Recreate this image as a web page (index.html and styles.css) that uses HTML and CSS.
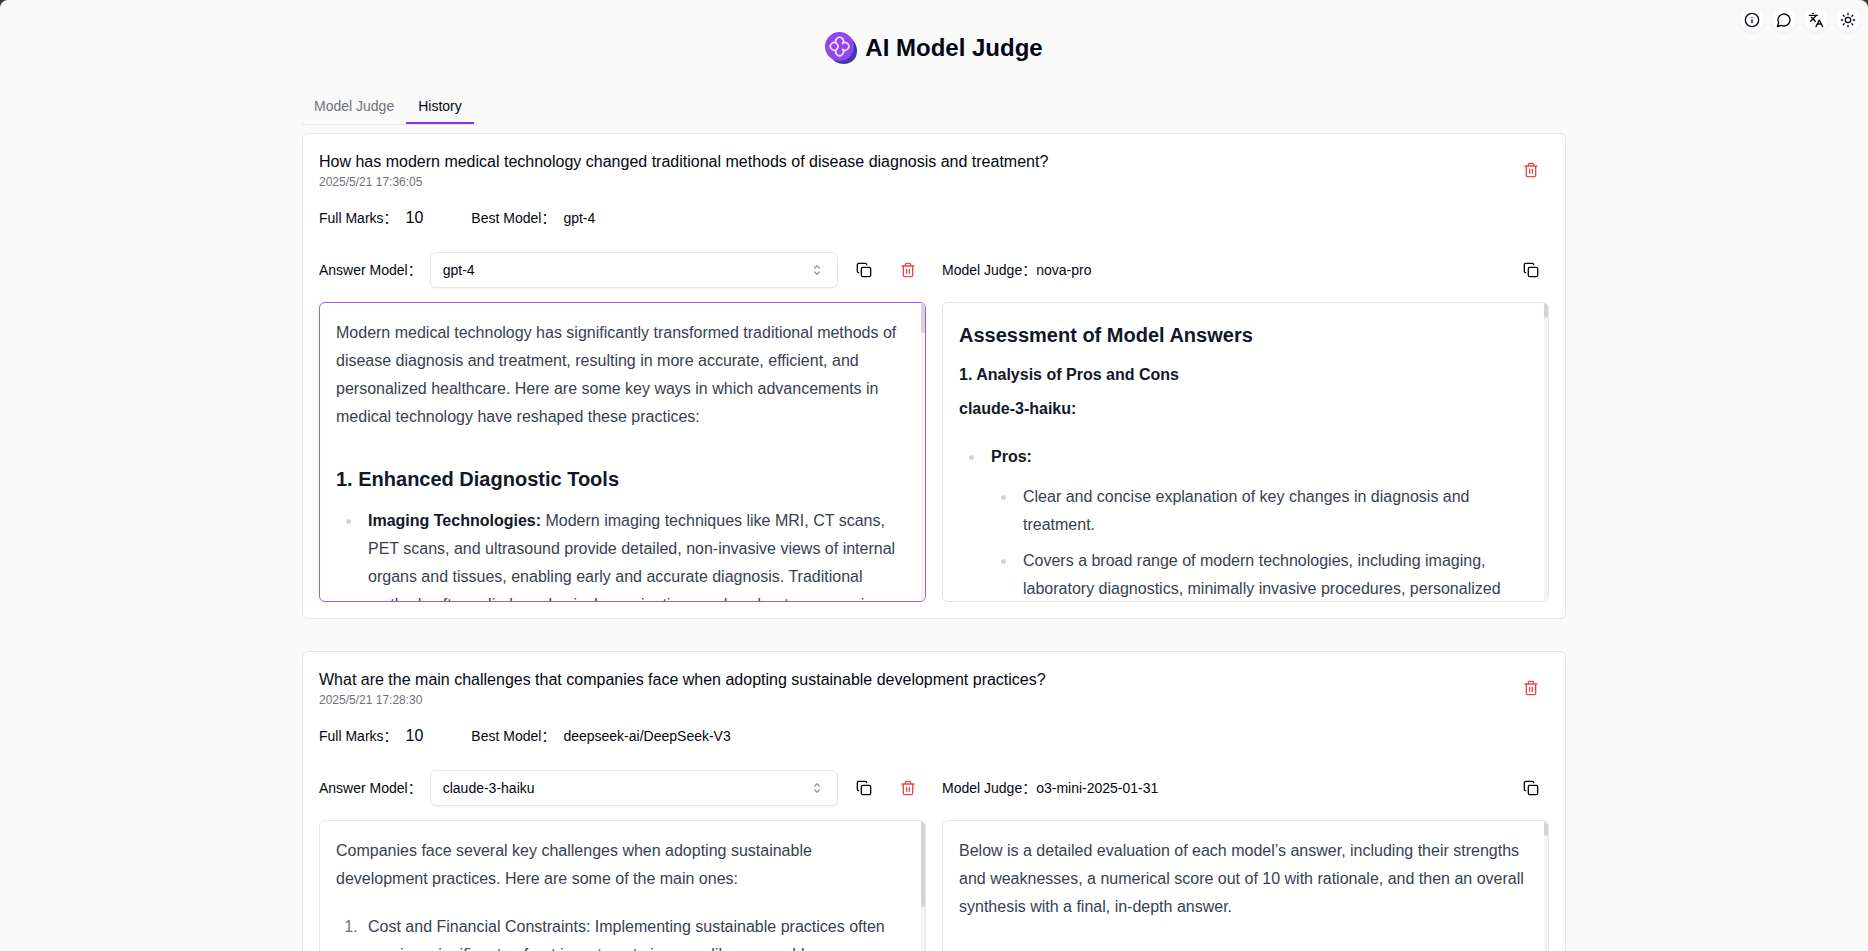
FILE: index.html
```html
<!DOCTYPE html>
<html lang="en">
<head>
<meta charset="utf-8">
<title>AI Model Judge</title>
<link rel="stylesheet" href="styles.css">
</head>
<body>
<svg class="sprite" aria-hidden="true">
  <symbol id="copy" viewBox="0 0 24 24"><rect width="14" height="14" x="8" y="8" rx="2"/><path d="M4 16c-1.1 0-2-.9-2-2V4c0-1.1.9-2 2-2h10c1.1 0 2 .9 2 2"/></symbol>
  <symbol id="trash" viewBox="0 0 24 24"><path d="M3 6h18M19 6v14c0 1-1 2-2 2H7c-1 0-2-1-2-2V6M8 6V4c0-1 1-2 2-2h4c1 0 2 1 2 2v2M10 11v6M14 11v6"/></symbol>
  <symbol id="caret" viewBox="0 0 15 15"><path d="M5.25 5.75 7.5 3.5l2.25 2.25M5.25 9.25 7.5 11.5l2.25-2.25"/></symbol>
</svg>
<div class="page">
  <nav class="tools" aria-label="Tools">
    <button class="tool" type="button" aria-label="About"><svg class="icon" viewBox="0 0 24 24"><circle cx="12" cy="12" r="10"/><path d="M12 16v-4M12 8h.01"/></svg></button>
    <button class="tool" type="button" aria-label="Feedback"><svg class="icon" viewBox="0 0 24 24"><path d="M7.9 20A9 9 0 1 0 4 16.1L2 22Z"/></svg></button>
    <button class="tool" type="button" aria-label="Language"><svg class="icon" viewBox="0 0 24 24"><path d="m5 8 6 6M4 14l6-6 2-3M2 5h12M7 2h1M22 22l-5-10-5 10M14 18h6"/></svg></button>
    <button class="tool" type="button" aria-label="Theme"><svg class="icon" viewBox="0 0 24 24"><circle cx="12" cy="12" r="4"/><path d="M12 2v2M12 20v2M4.93 4.93l1.41 1.41M17.66 17.66l1.41 1.41M2 12h2M20 12h2M6.34 17.66l-1.41 1.41M19.07 4.93l-1.41 1.41"/></svg></button>
  </nav>
  <main class="container">
    <header class="brand">
      <svg class="logo" viewBox="0 0 32 32" aria-hidden="true">
        <path class="logo-shade" d="M24 5c5 3 8 8 8 14 0 8-6 13-13 13-6 0-11-3-14-8z"/>
        <circle class="logo-face" cx="14.5" cy="14.5" r="14.5"/>
        <path class="logo-mark" d="M11.7 11.5a3.8 3.8 0 1 1 5.8 0a3.8 3.8 0 1 1 0 5.8a3.8 3.8 0 1 1-5.8 0a3.8 3.8 0 1 1 0-5.8q2.8 2.9 0 5.8"/>
      </svg>
      <h1 class="title">AI Model Judge</h1>
    </header>
    <div class="tabs" role="tablist">
      <button class="tab" type="button" role="tab" aria-selected="false">Model Judge</button>
      <button class="tab tab-active" type="button" role="tab" aria-selected="true">History</button>
    </div>
    <div class="records">
      <article class="card">
        <div class="card-head">
          <div>
            <h2 class="question">How has modern medical technology changed traditional methods of disease diagnosis and treatment?</h2>
            <time class="date">2025/5/21 17:36:05</time>
          </div>
          <button class="action danger" type="button" aria-label="Delete record"><svg class="icon"><use href="#trash"/></svg></button>
        </div>
        <div class="summary">
          <div class="fact"><span class="label">Full Marks：</span><span>10</span></div>
          <div class="fact"><span class="label">Best Model：</span><span class="label">gpt-4</span></div>
        </div>
        <div class="columns">
          <section class="column">
            <div class="bar">
              <label class="label" for="answer-1">Answer Model：</label>
              <div class="picker"><select class="select" id="answer-1"><option>gpt-4</option><option>claude-3-haiku</option></select><svg class="caret" aria-hidden="true"><use href="#caret"/></svg></div>
              <button class="action" type="button" aria-label="Copy answer"><svg class="icon"><use href="#copy"/></svg></button>
              <button class="action danger" type="button" aria-label="Delete answer"><svg class="icon"><use href="#trash"/></svg></button>
            </div>
            <div class="panel panel-best">
              <div class="prose">
                <p>Modern medical technology has significantly transformed traditional methods of disease diagnosis and treatment, resulting in more accurate, efficient, and personalized healthcare. Here are some key ways in which advancements in medical technology have reshaped these practices:</p>
                <h3>1. Enhanced Diagnostic Tools</h3>
                <ul><li><strong>Imaging Technologies:</strong> Modern imaging techniques like MRI, CT scans, PET scans, and ultrasound provide detailed, non-invasive views of internal organs and tissues, enabling early and accurate diagnosis. Traditional methods often relied on physical examinations and exploratory surgeries.</li></ul>
              </div>
              <div class="track"><div class="thumb thumb-medium"></div></div>
            </div>
          </section>
          <section class="column">
            <div class="bar">
              <span class="label judge">Model Judge：nova-pro</span>
              <button class="action" type="button" aria-label="Copy assessment"><svg class="icon"><use href="#copy"/></svg></button>
            </div>
            <div class="panel">
              <div class="prose">
                <h3>Assessment of Model Answers</h3>
                <h4>1. Analysis of Pros and Cons</h4>
                <p><strong>claude-3-haiku:</strong></p>
                <ul><li><strong>Pros:</strong>
                  <ul>
                    <li>Clear and concise explanation of key changes in diagnosis and treatment.</li>
                    <li>Covers a broad range of modern technologies, including imaging, laboratory diagnostics, minimally invasive procedures, personalized</li>
                  </ul></li></ul>
              </div>
              <div class="track"><div class="thumb thumb-short"></div></div>
            </div>
          </section>
        </div>
      </article>
      <article class="card">
        <div class="card-head">
          <div>
            <h2 class="question">What are the main challenges that companies face when adopting sustainable development practices?</h2>
            <time class="date">2025/5/21 17:28:30</time>
          </div>
          <button class="action danger" type="button" aria-label="Delete record"><svg class="icon"><use href="#trash"/></svg></button>
        </div>
        <div class="summary">
          <div class="fact"><span class="label">Full Marks：</span><span>10</span></div>
          <div class="fact"><span class="label">Best Model：</span><span class="label">deepseek-ai/DeepSeek-V3</span></div>
        </div>
        <div class="columns">
          <section class="column">
            <div class="bar">
              <label class="label" for="answer-2">Answer Model：</label>
              <div class="picker"><select class="select" id="answer-2"><option>claude-3-haiku</option><option>gpt-4</option></select><svg class="caret" aria-hidden="true"><use href="#caret"/></svg></div>
              <button class="action" type="button" aria-label="Copy answer"><svg class="icon"><use href="#copy"/></svg></button>
              <button class="action danger" type="button" aria-label="Delete answer"><svg class="icon"><use href="#trash"/></svg></button>
            </div>
            <div class="panel">
              <div class="prose">
                <p>Companies face several key challenges when adopting sustainable development practices. Here are some of the main ones:</p>
                <ol><li>Cost and Financial Constraints: Implementing sustainable practices often requires significant upfront investments in areas like renewable energy.</li></ol>
              </div>
              <div class="track"><div class="thumb thumb-long"></div></div>
            </div>
          </section>
          <section class="column">
            <div class="bar">
              <span class="label judge">Model Judge：o3-mini-2025-01-31</span>
              <button class="action" type="button" aria-label="Copy assessment"><svg class="icon"><use href="#copy"/></svg></button>
            </div>
            <div class="panel">
              <div class="prose">
                <p>Below is a detailed evaluation of each model’s answer, including their strengths and weaknesses, a numerical score out of 10 with rationale, and then an overall synthesis with a final, in-depth answer.</p>
              </div>
              <div class="track"><div class="thumb thumb-short"></div></div>
            </div>
          </section>
        </div>
      </article>
    </div>
  </main>
</div>
</body>
</html>
```
FILE: styles.css
```css
* { box-sizing: border-box; }
html { background: #3b383c; scrollbar-width: none; }
body {
  margin: 0;
  color: #030712;
  font: 16px/24px "Liberation Sans", "Noto Sans CJK SC", Arial, sans-serif;
}
h1, h2, h3, h4, p, ul, ol { margin: 0; }
button, select { font: inherit; color: inherit; }
button { border: 0; padding: 0; background: none; cursor: pointer; }
.sprite { position: absolute; width: 0; height: 0; }
.page { position: relative; height: 100vh; overflow: hidden; background: #fafafa; border-radius: 8px 8px 0 0; }
.icon {
  display: block;
  width: 16px;
  height: 16px;
  fill: none;
  stroke: currentColor;
  stroke-width: 2;
  stroke-linecap: round;
  stroke-linejoin: round;
}
.tools { position: absolute; top: 8px; right: 8px; display: flex; gap: 8px; }
.tool {
  display: grid;
  place-items: center;
  width: 24px;
  height: 24px;
  border-radius: 50%;
  background: #fff;
  box-shadow: 0 1px 2px rgb(0 0 0 / 5%);
}
.container { max-width: 1280px; margin: 0 auto; padding: 32px 8px; }
.brand { display: flex; align-items: center; justify-content: center; gap: 8px; }
.logo { width: 32px; height: 32px; }
.logo-shade { fill: #4338ab; }
.logo-face { fill: #9146ee; }
.logo-mark { fill: none; stroke: #f1defd; stroke-width: 1.7; stroke-linejoin: round; }
.title { font-size: 24px; line-height: 32px; }
.tabs { display: flex; width: fit-content; margin: 24px 0 8px; border-bottom: 1px solid #e5e7eb; }
.tab { height: 36px; padding: 2px 12px 0; border-bottom: 2px solid transparent; font-size: 14px; color: #71717a; }
.tab-active { border-color: #7c3aed; color: #030712; }
.records { display: grid; gap: 32px; }
.card { padding: 16px; border: 1px solid #e5e7eb; border-radius: 6px; background: #fff; }
.card-head { display: flex; align-items: center; justify-content: space-between; }
.question { font-size: 16px; font-weight: 400; }
.date { display: block; font-size: 12px; line-height: 16px; color: #71717a; }
.action { display: grid; flex: none; place-items: center; width: 36px; height: 36px; }
.danger { color: #ef4444; }
.summary { display: flex; gap: 48px; margin: 16px 0 22px; }
.fact { display: flex; align-items: center; gap: 8px; height: 24px; }
.label { font-size: 14px; line-height: 20px; white-space: nowrap; }
.columns { display: grid; grid-template-columns: repeat(2, minmax(0, 1fr)); gap: 16px; }
.column { display: grid; gap: 14px; }
.bar { display: flex; align-items: center; gap: 8px; }
.judge { flex: 1; }
.picker { position: relative; flex: 1; }
.select {
  display: block;
  width: 100%;
  height: 36px;
  padding: 0 12px;
  appearance: none;
  border: 1px solid #e5e7eb;
  border-radius: 6px;
  background: #fff;
  box-shadow: 0 1px 2px rgb(0 0 0 / 5%);
  font-size: 14px;
}
.caret {
  position: absolute;
  top: 10px;
  right: 13px;
  width: 16px;
  height: 16px;
  fill: none;
  stroke: currentColor;
  stroke-linecap: round;
  stroke-linejoin: round;
  opacity: .5;
  pointer-events: none;
}
.panel { display: flex; height: 300px; overflow: hidden; border: 1px solid #e5e7eb; border-radius: 6px; }
.panel-best { border-color: #a855f7; }
.track { flex: none; width: 4px; background: #f3f4f6; }
.thumb { border-radius: 2px; background: #d1d5db; }
.thumb-short { height: 15px; }
.thumb-medium { height: 30px; }
.thumb-long { height: 86px; }
.prose { flex: 1; min-width: 0; padding: 16px; line-height: 28px; color: #374151; }
.prose h3 { margin: 32px 0 12px; font-size: 20px; line-height: 32px; color: #111827; }
.prose h3:first-child { margin-top: 0; }
.prose h4 { margin-bottom: 8px; font-size: 16px; line-height: 24px; color: #111827; }
.prose strong { color: #111827; }
.prose ul, .prose ol { padding-left: 26px; }
.prose p + ul, .prose p + ol { margin-top: 20px; }
.prose li { padding-left: 6px; }
.prose li ul { margin-top: 12px; list-style: disc; }
.prose li + li { margin-top: 8px; }
.prose li::marker { color: #d1d5db; }
.prose ol > li::marker { color: #6b7280; }
```
